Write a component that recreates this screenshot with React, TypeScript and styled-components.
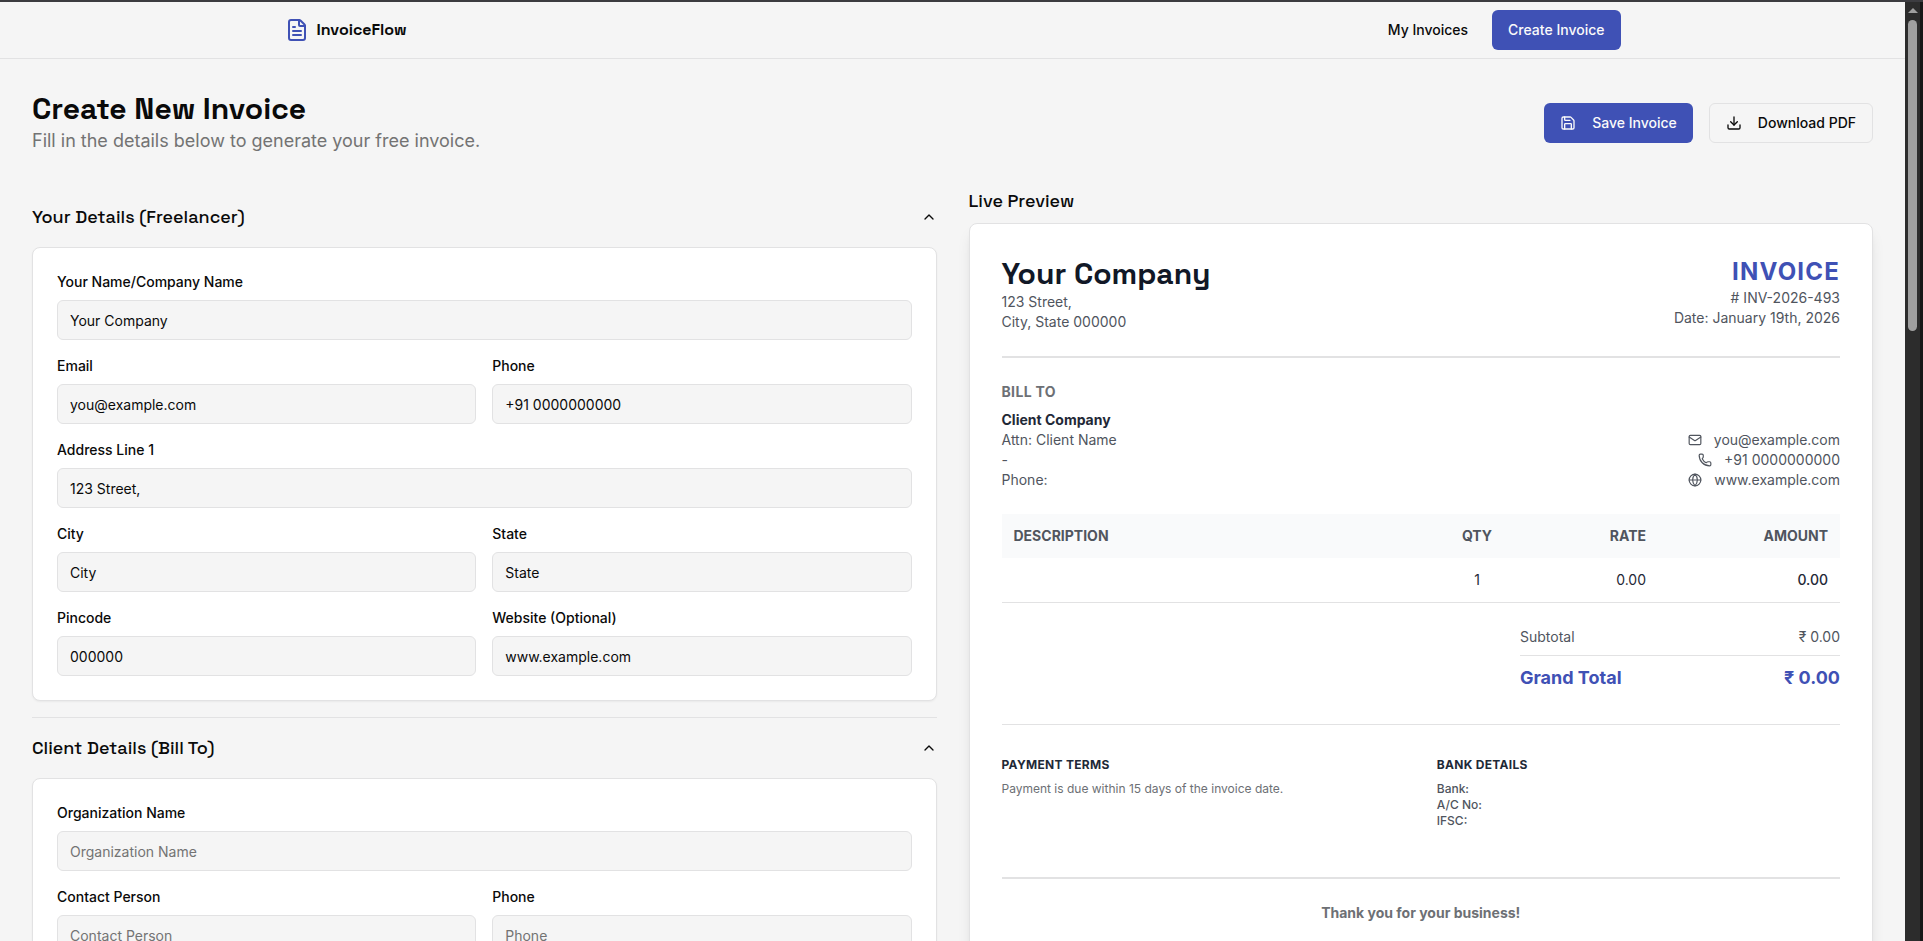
import React, { useState } from "react";
import styled, { createGlobalStyle, css } from "styled-components";
import { ChevronUp, Download, FileText, Globe, Mail, Phone, Save } from "lucide-react";

const color = {
  page: "#f5f5f5",
  card: "#ffffff",
  border: "#e2e2e3",
  text: "#0a0a0a",
  muted: "#737373",
  primary: "#3f51b5",
  gray500: "#6d7075",
  gray600: "#50555e",
  gray800: "#1f2937",
  gray900: "#111827",
};

const GlobalStyle = createGlobalStyle`
  *, *::before, *::after { box-sizing: border-box; }
  body {
    margin: 0;
    background: ${color.page};
    color: ${color.text};
    font-family: Inter, "Liberation Sans", sans-serif;
    font-size: 14px;
    line-height: 20px;
  }
  h1, h2, h3, h4, p { margin: 0; }
  button, input { font: inherit; color: inherit; }
`;

const heading = css`
  font-family: "Space Grotesk", Inter, sans-serif;
`;

/* Window frame */

const Frame = styled.div`
  display: flex;
  height: 100vh;
  border-top: 2px solid #3c3c40;
  overflow: hidden;
`;

const Viewport = styled.div`
  flex: 1;
  min-width: 0;
  overflow-y: auto;
  scrollbar-width: none;
`;

const ScrollTrack = styled.div`
  display: flex;
  flex-direction: column;
  align-items: center;
  gap: 7px;
  width: 18px;
  padding-top: 6px;
  background: #2c2c2c;
  border-right: 3px solid #171717;
`;

const ScrollArrow = styled.span`
  border: 5px solid transparent;
  border-top: 0;
  border-bottom: 5px solid #9f9f9f;
`;

const ScrollThumb = styled.span`
  width: 9px;
  height: calc(100% / 3);
  border-radius: 5px;
  background: #9f9f9f;
`;

/* Site header */

const Header = styled.header`
  border-bottom: 1px solid ${color.border};
`;

const HeaderInner = styled.div`
  display: flex;
  align-items: center;
  justify-content: space-between;
  max-width: 1400px;
  height: 56px;
  margin: 0 auto;
  padding: 0 32px;
`;

const Brand = styled.a`
  ${heading}
  display: flex;
  align-items: center;
  gap: 8px;
  color: ${color.text};
  font-size: 16px;
  font-weight: 700;
  line-height: 24px;
  text-decoration: none;

  svg { color: ${color.primary}; }
`;

const Nav = styled.nav`
  display: flex;
  align-items: center;
  gap: 24px;
`;

const NavLink = styled.a`
  color: ${color.text};
  font-weight: 500;
  text-decoration: none;
`;

const Button = styled.button<{ $primary?: boolean }>`
  display: inline-flex;
  align-items: center;
  justify-content: center;
  gap: 16px;
  height: 40px;
  padding: 0 16px;
  border: ${(p) => (p.$primary ? "0" : `1px solid ${color.border}`)};
  border-radius: 6px;
  background: ${(p) => (p.$primary ? color.primary : color.page)};
  color: ${(p) => (p.$primary ? "#fafafa" : color.text)};
  font-weight: 500;
  white-space: nowrap;
  cursor: pointer;
`;

/* Page */

const Main = styled.main`
  padding: 32px;
`;

const TitleBar = styled.div`
  display: flex;
  align-items: center;
  justify-content: space-between;
  margin-bottom: 32px;
`;

const Title = styled.h1`
  ${heading}
  font-size: 30px;
  font-weight: 700;
  line-height: 36px;
`;

const Subtitle = styled.p`
  color: ${color.muted};
  font-size: 18px;
  line-height: 28px;
`;

const Actions = styled.div`
  display: flex;
  gap: 16px;
`;

const Columns = styled.div`
  display: grid;
  grid-template-columns: 1fr 1fr;
  gap: 32px;
`;

/* Form */

const Section = styled.section`
  padding-bottom: 16px;
  border-bottom: 1px solid ${color.border};
`;

const SectionTrigger = styled.button`
  ${heading}
  display: flex;
  align-items: center;
  justify-content: space-between;
  width: 100%;
  padding: 16px 0;
  border: 0;
  background: none;
  font-size: 18px;
  font-weight: 500;
  line-height: 28px;
  text-align: left;
  cursor: pointer;
`;

const FormCard = styled.div`
  display: grid;
  grid-template-columns: 1fr 1fr;
  gap: 16px;
  padding: 24px;
  border: 1px solid ${color.border};
  border-radius: 8px;
  background: ${color.card};
  box-shadow: 0 1px 2px rgba(0, 0, 0, 0.05);
`;

const Field = styled.div<{ $wide?: boolean }>`
  display: flex;
  flex-direction: column;
  gap: 8px;
  grid-column: ${(p) => (p.$wide ? "1 / -1" : "auto")};
`;

const Label = styled.label`
  font-weight: 500;
`;

const Input = styled.input`
  width: 100%;
  height: 40px;
  padding: 0 12px;
  border: 1px solid ${color.border};
  border-radius: 6px;
  background: ${color.page};

  &::placeholder { color: ${color.muted}; opacity: 1; }
`;

/* Invoice preview */

const PreviewColumn = styled.section`
  display: flex;
  flex-direction: column;
  gap: 8px;
`;

const PreviewHeading = styled.h2`
  ${heading}
  font-size: 18px;
  font-weight: 500;
  line-height: 28px;
`;

const Paper = styled.article`
  flex: 1;
  padding: 32px;
  border: 1px solid ${color.border};
  border-radius: 8px;
  background: ${color.card};
  color: ${color.gray600};
  box-shadow: 0 10px 15px -3px rgba(0, 0, 0, 0.1), 0 4px 6px -4px rgba(0, 0, 0, 0.1);
`;

const Split = styled.div<{ $alignEnd?: boolean }>`
  display: flex;
  justify-content: space-between;
  align-items: ${(p) => (p.$alignEnd ? "flex-end" : "flex-start")};
  margin-bottom: 24px;
`;

const PaperHeader = styled(Split)`
  padding-bottom: 24px;
  border-bottom: 2px solid ${color.border};
`;

const CompanyName = styled.h2`
  ${heading}
  color: ${color.gray900};
  font-size: 30px;
  font-weight: 700;
  line-height: 36px;
`;

const InvoiceMeta = styled.div`
  text-align: right;
`;

const InvoiceWord = styled.h3`
  color: ${color.primary};
  font-size: 24px;
  font-weight: 700;
  line-height: 32px;
  letter-spacing: 0.05em;
`;

const BillTo = styled.h4`
  margin-bottom: 8px;
  color: ${color.gray500};
  font-size: 14px;
  font-weight: 700;
  letter-spacing: 0.025em;
`;

const ClientName = styled.p`
  color: ${color.gray800};
  font-weight: 700;
`;

const ContactRow = styled.p`
  display: flex;
  align-items: center;
  justify-content: flex-end;
  gap: 12px;
`;

const Items = styled.table`
  width: 100%;
  margin-bottom: 24px;
  border-collapse: separate;
  border-spacing: 0;
  table-layout: fixed;
`;

const HeadCell = styled.th<{ $align?: string; $width: string }>`
  width: ${(p) => p.$width};
  padding: 12px;
  background: #f9fafb;
  font-weight: 700;
  text-align: ${(p) => p.$align ?? "left"};
`;

const Cell = styled.td<{ $align?: string; $strong?: boolean }>`
  height: 45px;
  padding: 12px;
  border-bottom: 1px solid ${color.border};
  color: ${color.gray800};
  font-weight: ${(p) => (p.$strong ? 500 : 400)};
  text-align: ${(p) => p.$align ?? "left"};
`;

const Totals = styled.div`
  width: 320px;
  margin: 0 0 32px auto;
`;

const TotalRow = styled.div`
  display: flex;
  justify-content: space-between;
  padding-bottom: 8px;
`;

const GrandTotalRow = styled.div`
  display: flex;
  justify-content: space-between;
  padding-top: 8px;
  border-top: 1px solid ${color.border};
  color: ${color.primary};
  font-size: 18px;
  font-weight: 700;
  line-height: 28px;
`;

const Notes = styled.div`
  display: grid;
  grid-template-columns: 1fr 1fr;
  gap: 32px;
  padding: 32px 0 48px;
  border-top: 1px solid ${color.border};
  font-size: 12px;
  line-height: 16px;
`;

const NoteTitle = styled.h4`
  margin-bottom: 8px;
  color: ${color.gray800};
  font-size: 12px;
  font-weight: 700;
  letter-spacing: 0.025em;
`;

const NoteText = styled.p`
  color: ${color.gray500};
`;

const NoteLabel = styled.p`
  font-weight: 500;
`;

const ThankYou = styled.p`
  padding-top: 24px;
  border-top: 2px solid ${color.border};
  color: ${color.gray500};
  font-weight: 700;
  text-align: center;
`;

type FieldSpec = {
  id: string;
  label: string;
  value?: string;
  placeholder?: string;
  wide?: boolean;
};

const yourFields: FieldSpec[] = [
  { id: "name", label: "Your Name/Company Name", value: "Your Company", wide: true },
  { id: "email", label: "Email", value: "you@example.com" },
  { id: "phone", label: "Phone", value: "+91 0000000000" },
  { id: "address", label: "Address Line 1", value: "123 Street,", wide: true },
  { id: "city", label: "City", value: "City" },
  { id: "state", label: "State", value: "State" },
  { id: "pincode", label: "Pincode", value: "000000" },
  { id: "website", label: "Website (Optional)", value: "www.example.com" },
];

const clientFields: FieldSpec[] = [
  { id: "org", label: "Organization Name", placeholder: "Organization Name", wide: true },
  { id: "contact", label: "Contact Person", placeholder: "Contact Person" },
  { id: "client-phone", label: "Phone", placeholder: "Phone" },
];

function FormSection({ title, fields }: { title: string; fields: FieldSpec[] }) {
  const [open, setOpen] = useState(true);
  return (
    <Section>
      <SectionTrigger type="button" aria-expanded={open} onClick={() => setOpen(!open)}>
        {title}
        <ChevronUp size={16} />
      </SectionTrigger>
      {open && (
        <FormCard>
          {fields.map((f) => (
            <Field key={f.id} $wide={f.wide}>
              <Label htmlFor={f.id}>{f.label}</Label>
              <Input id={f.id} defaultValue={f.value} placeholder={f.placeholder} />
            </Field>
          ))}
        </FormCard>
      )}
    </Section>
  );
}

function InvoicePaper() {
  return (
    <Paper>
      <PaperHeader>
        <div>
          <CompanyName>Your Company</CompanyName>
          <p>123 Street,</p>
          <p>City, State 000000</p>
        </div>
        <InvoiceMeta>
          <InvoiceWord>INVOICE</InvoiceWord>
          <p># INV-2026-493</p>
          <p>Date: January 19th, 2026</p>
        </InvoiceMeta>
      </PaperHeader>

      <Split $alignEnd>
        <div>
          <BillTo>BILL TO</BillTo>
          <ClientName>Client Company</ClientName>
          <p>Attn: Client Name</p>
          <p>-</p>
          <p>Phone:</p>
        </div>
        <div>
          <ContactRow><Mail size={14} />you@example.com</ContactRow>
          <ContactRow><Phone size={14} />+91 0000000000</ContactRow>
          <ContactRow><Globe size={14} />www.example.com</ContactRow>
        </div>
      </Split>

      <Items>
        <thead>
          <tr>
            <HeadCell $width="auto">DESCRIPTION</HeadCell>
            <HeadCell $width="110px" $align="center">QTY</HeadCell>
            <HeadCell $width="126px" $align="right">RATE</HeadCell>
            <HeadCell $width="182px" $align="right">AMOUNT</HeadCell>
          </tr>
        </thead>
        <tbody>
          <tr>
            <Cell />
            <Cell $align="center">1</Cell>
            <Cell $align="right">0.00</Cell>
            <Cell $align="right" $strong>0.00</Cell>
          </tr>
        </tbody>
      </Items>

      <Totals>
        <TotalRow><span>Subtotal</span><span>₹ 0.00</span></TotalRow>
        <GrandTotalRow><span>Grand Total</span><span>₹ 0.00</span></GrandTotalRow>
      </Totals>

      <Notes>
        <div>
          <NoteTitle>PAYMENT TERMS</NoteTitle>
          <NoteText>Payment is due within 15 days of the invoice date.</NoteText>
        </div>
        <div>
          <NoteTitle>BANK DETAILS</NoteTitle>
          <NoteLabel>Bank:</NoteLabel>
          <NoteLabel>A/C No:</NoteLabel>
          <NoteLabel>IFSC:</NoteLabel>
        </div>
      </Notes>

      <ThankYou>Thank you for your business!</ThankYou>
    </Paper>
  );
}

export default function App() {
  return (
    <>
      <GlobalStyle />
      <Frame>
        <Viewport>
          <Header>
            <HeaderInner>
              <Brand href="#">
                <FileText size={24} />
                InvoiceFlow
              </Brand>
              <Nav>
                <NavLink href="#invoices">My Invoices</NavLink>
                <Button $primary type="button">Create Invoice</Button>
              </Nav>
            </HeaderInner>
          </Header>
          <Main>
            <TitleBar>
              <div>
                <Title>Create New Invoice</Title>
                <Subtitle>Fill in the details below to generate your free invoice.</Subtitle>
              </div>
              <Actions>
                <Button $primary type="button"><Save size={16} />Save Invoice</Button>
                <Button type="button"><Download size={16} />Download PDF</Button>
              </Actions>
            </TitleBar>
            <Columns>
              <div>
                <FormSection title="Your Details (Freelancer)" fields={yourFields} />
                <FormSection title="Client Details (Bill To)" fields={clientFields} />
              </div>
              <PreviewColumn>
                <PreviewHeading>Live Preview</PreviewHeading>
                <InvoicePaper />
              </PreviewColumn>
            </Columns>
          </Main>
        </Viewport>
        <ScrollTrack aria-hidden="true">
          <ScrollArrow />
          <ScrollThumb />
        </ScrollTrack>
      </Frame>
    </>
  );
}
